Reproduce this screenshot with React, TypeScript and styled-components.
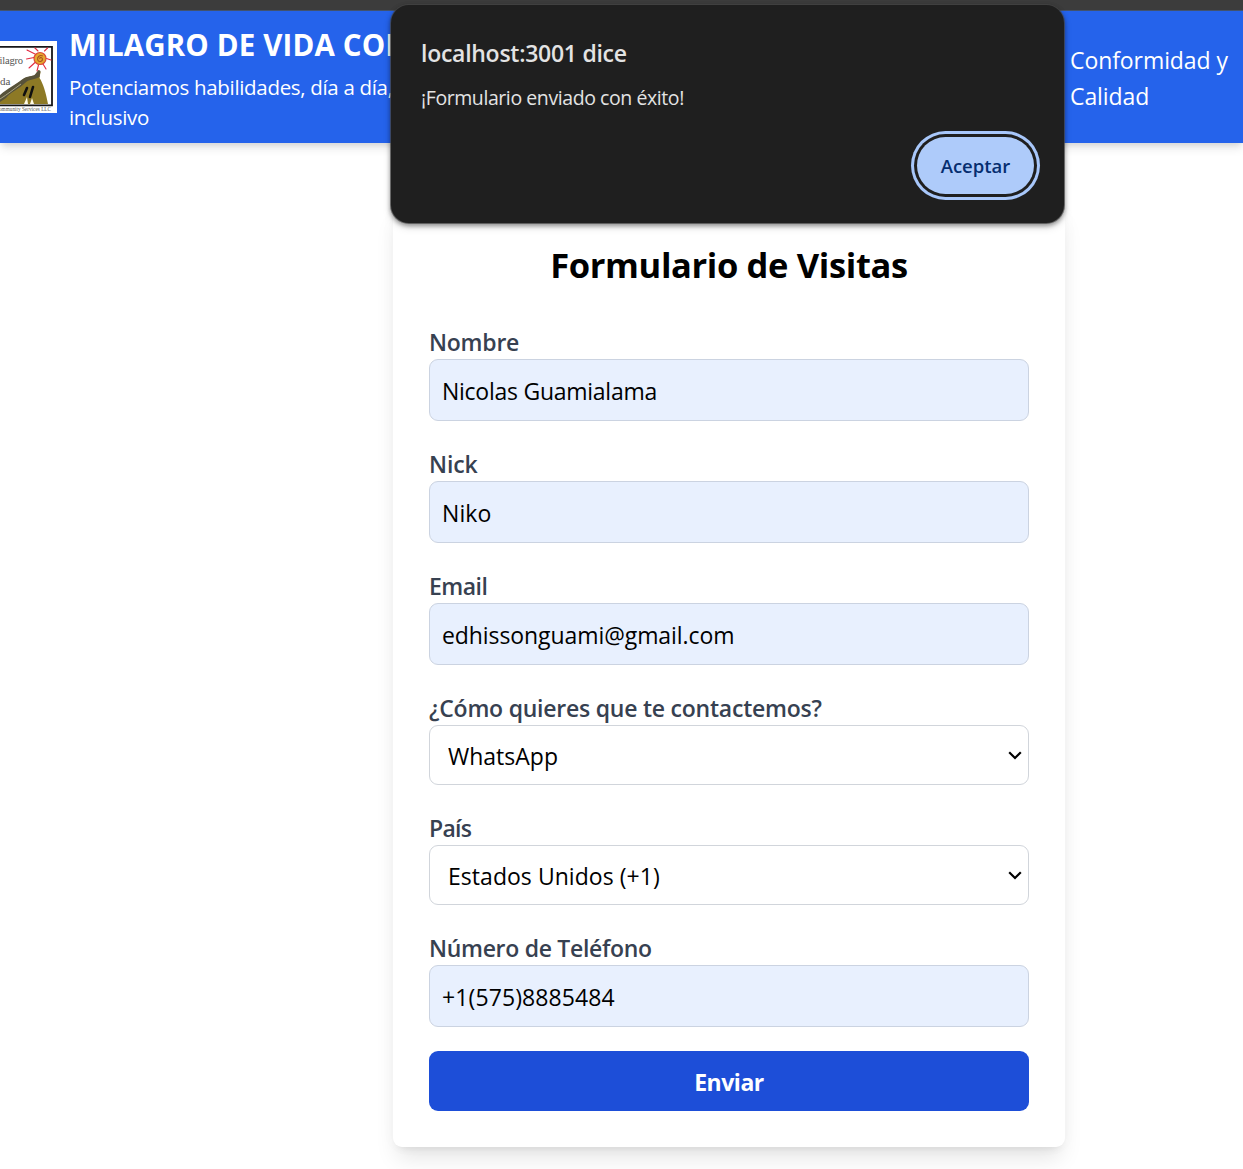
import React from "react";
import styled, { createGlobalStyle } from "styled-components";

const GlobalStyle = createGlobalStyle`
  *, *::before, *::after { box-sizing: border-box; }
  body {
    margin: 0;
    background: #ffffff;
    color: #000000;
    font-family: "Segoe UI", "Open Sans", "Noto Sans", sans-serif;
    overflow: hidden;
  }
`;

const Page = styled.div`
  position: relative;
  width: 1243px;
  height: 1169px;
  overflow: hidden;
  display: flex;
  flex-direction: column;
`;

const BrowserEdge = styled.div`
  flex: none;
  height: 11px;
  background: #3c3c3c;
  border-bottom: 1px solid #44546f;
`;

const Header = styled.header`
  flex: none;
  height: 132px;
  display: flex;
  align-items: center;
  background: #2563eb;
  color: #ffffff;
  box-shadow: 0 6px 9px -1px rgba(0, 0, 0, 0.1), 0 3px 6px -2px rgba(0, 0, 0, 0.1);
`;

const Logo = styled.svg`
  flex: none;
  width: 57px;
  height: 72px;
  margin-right: 12px;
`;

const Brand = styled.div`
  flex: none;
  width: 1001px;
  padding-top: 2px;
`;

const BrandName = styled.h1`
  margin: 0;
  font-size: 29.5px;
  line-height: 42px;
  font-weight: 700;
  letter-spacing: 0.15px;
  white-space: nowrap;
`;

const Tagline = styled.p`
  margin: 0;
  padding-top: 6px;
  font-size: 20.5px;
  line-height: 30px;
  letter-spacing: -0.32px;
`;

const NavLink = styled.a`
  color: #ffffff;
  font-size: 23px;
  line-height: 36px;
  margin-top: 2px;
  letter-spacing: -0.08px;
`;

const Main = styled.main`
  flex: none;
  display: flex;
  padding: 62px 178px 0 393px;
`;

const Card = styled.form`
  width: 672px;
  height: 942px;
  padding: 36px;
  display: flex;
  flex-direction: column;
  background: #ffffff;
  border-radius: 9px;
  box-shadow: 0 15px 22px -4px rgba(0, 0, 0, 0.1), 0 6px 9px -6px rgba(0, 0, 0, 0.1), 0 0 18px rgba(0, 0, 0, 0.025);
`;

const Heading = styled.h2`
  margin: 0 0 36px;
  text-align: center;
  font-size: 34.5px;
  line-height: 48px;
  font-weight: 700;
  letter-spacing: -0.36px;
`;

const Field = styled.div`
  display: flex;
  flex-direction: column;
  margin-bottom: 26px;

  &:last-of-type { margin-bottom: 24px; }
`;

const Label = styled.label<{ $tracking?: number }>`
  height: 34px;
  font-size: 23px;
  line-height: 34px;
  font-weight: 600;
  color: #374151;
  letter-spacing: ${({ $tracking = -0.23 }) => $tracking}px;
`;

const Input = styled.input<{ $tracking?: number }>`
  height: 62px;
  padding: 1px 12px 0;
  border: 1px solid #cbd3e1;
  border-radius: 9px;
  background: #e8f0fe;
  color: #000000;
  font: 400 23px/36px "Segoe UI", "Open Sans", "Noto Sans", sans-serif;
  letter-spacing: ${({ $tracking = 0 }) => $tracking}px;
  outline: none;
`;

const SelectFrame = styled.div`
  display: grid;
  align-items: center;

  & > * { grid-area: 1 / 1; }
`;

const Select = styled.select<{ $tracking?: number }>`
  appearance: none;
  width: 100%;
  height: 60px;
  padding: 1px 48px 0 18px;
  border: 1px solid #d1d5db;
  border-radius: 9px;
  background: #ffffff;
  color: #000000;
  font: 400 23px/36px "Segoe UI", "Open Sans", "Noto Sans", sans-serif;
  letter-spacing: ${({ $tracking = 0 }) => $tracking}px;
  outline: none;
`;

const Chevron = styled.svg`
  justify-self: end;
  width: 16px;
  height: 12px;
  margin-right: 6px;
  pointer-events: none;
`;

const Submit = styled.button`
  height: 60px;
  padding: 1px 0 0;
  border: 0;
  border-radius: 9px;
  background: #1d4ed8;
  color: #ffffff;
  font: 700 23px/36px "Segoe UI", "Open Sans", "Noto Sans", sans-serif;
  letter-spacing: -0.45px;
`;

const Dialog = styled.div`
  position: absolute;
  left: 391px;
  top: 5px;
  width: 673px;
  height: 218px;
  padding: 29px 30px 0 30px;
  display: flex;
  flex-direction: column;
  border-radius: 18px;
  background: #1f1f1f;
  color: #e3e3e3;
  box-shadow: 0 0 0 1px rgba(70, 70, 70, 0.7), 0 2px 4px 1px rgba(0, 0, 0, 0.35), 0 4px 8px rgba(0, 0, 0, 0.15);
`;

const DialogTitle = styled.div`
  height: 38px;
  font-size: 23px;
  line-height: 38px;
  font-weight: 600;
  letter-spacing: -0.27px;
`;

const DialogText = styled.p`
  margin: 11px 0 0;
  height: 30px;
  font-size: 19.5px;
  line-height: 30px;
  letter-spacing: -0.42px;
`;

const Accept = styled.button`
  align-self: flex-end;
  width: 117px;
  height: 57px;
  margin: 24px 0 0;
  padding: 1px 0 0;
  border: 0;
  border-radius: 29px;
  background: #aecbfa;
  color: #062e6f;
  font: 600 18.5px/30px "Segoe UI", "Open Sans", "Noto Sans", sans-serif;
  box-shadow: 0 0 0 3px #1f1f1f, 0 0 0 6px #a8c7fa;
`;

const LogoText = styled.text`
  font-family: "Liberation Serif", serif;
  fill: #555555;
`;

function BrandLogo() {
  return (
    <Logo viewBox="0 0 57 72" aria-label="Milagro de Vida">
      <rect width="57" height="72" fill="#ffffff" />
      <path d="M0 5.8H52V64.4H0" fill="#ffffff" stroke="#171719" strokeWidth="1.8" />
      <g stroke="#e22b42" strokeWidth="1.1" strokeLinecap="round" fill="none">
        <path d="M34 16.5 26.5 18" />
        <path d="M35 13 27 9" />
        <path d="M38 10 35 7" />
        <path d="M44.5 10 47.5 7" />
        <path d="M46.5 17.5 51 19" />
        <path d="M43 23 46 28" />
        <path d="M38.5 24 37 30" />
        <path d="M35 21.5 29 27" />
      </g>
      <circle cx="40" cy="17.5" r="6" fill="#e5a72e" stroke="#dc4a35" strokeWidth="1.2" />
      <path d="M40 18c-1-1.8 2-2.3 2.4-.1.4 2.9-3.8 3.7-4.7.9-.8-3.1 2.3-5.2 5.1-3.7" fill="none" stroke="#a8501e" strokeWidth="1.1" />
      <path d="M0 55C8 48 15 45 22 39 27 35 33 36 35 34L39 29 40.5 31 39.5 37C43 42 46 52 48 63H0Z" fill="#8d7925" />
      <path d="M0 54C8 47 15 44 22 38.500C27 34.500 33 35.500 35 33.500L38.500 29 40.500 30 39.500 36C33 39 29 38 25 42 19 48 12 50 6 57L0 61Z" fill="#57523a" />
      <path d="M0 58C8 53 14 48 21 43" stroke="#aaa583" strokeWidth="1" fill="none" />
      <g stroke="#101010" strokeWidth="2.6" strokeLinecap="round">
        <path d="M27 47 24 54" />
        <path d="M33 46 30 56" />
      </g>
      <path d="M24 63 27 56 28 63ZM30 63 32 57 34 63Z" fill="#fffbe7" />
      <LogoText x="-0.500" y="23" fontSize="10.500" textLength="23.500">ilagro</LogoText>
      <LogoText x="0" y="43.500" fontSize="11" textLength="10.500">da</LogoText>
      <LogoText x="-1" y="70.300" fontSize="5.200" textLength="52">ommunity Services LLC</LogoText>
    </Logo>
  );
}

function TextField({ label, value, labelTracking, tracking }: { label: string; value: string; labelTracking?: number; tracking?: number }) {
  return (
    <Field>
      <Label $tracking={labelTracking}>{label}</Label>
      <Input $tracking={tracking} defaultValue={value} />
    </Field>
  );
}

function SelectField({ label, value, labelTracking, tracking }: { label: string; value: string; labelTracking?: number; tracking?: number }) {
  return (
    <Field>
      <Label $tracking={labelTracking}>{label}</Label>
      <SelectFrame>
        <Select $tracking={tracking} defaultValue={value}>
          <option>{value}</option>
        </Select>
        <Chevron viewBox="0 0 16 12">
          <path d="M2.200 3.200 8 9 13.800 3.200" fill="none" stroke="#000000" strokeWidth="2.200" />
        </Chevron>
      </SelectFrame>
    </Field>
  );
}

export default function App() {
  return (
    <Page>
      <GlobalStyle />
      <BrowserEdge />
      <Header>
        <BrandLogo />
        <Brand>
          <BrandName>MILAGRO DE VIDA COM</BrandName>
          <Tagline>
            Potenciamos habilidades, día a día,
            <br />
            inclusivo
          </Tagline>
        </Brand>
        <NavLink>
          Conformidad y
          <br />
          Calidad
        </NavLink>
      </Header>
      <Main>
        <Card onSubmit={(e) => e.preventDefault()}>
          <Heading>Formulario de Visitas</Heading>
          <TextField label="Nombre" value="Nicolas Guamialama" tracking={-0.26} />
          <TextField label="Nick" value="Niko" labelTracking={-0.1} tracking={0.1} />
          <TextField label="Email" value="edhissonguami@gmail.com" labelTracking={-0.5} tracking={-0.08} />
          <SelectField label="¿Cómo quieres que te contactemos?" value="WhatsApp" />
          <SelectField label="País" value="Estados Unidos (+1)" labelTracking={-0.7} tracking={0.04} />
          <TextField label="Número de Teléfono" value="+1(575)8885484" labelTracking={-0.3} tracking={0.1} />
          <Submit type="submit">Enviar</Submit>
        </Card>
      </Main>
      <Dialog role="alertdialog">
        <DialogTitle>localhost:3001 dice</DialogTitle>
        <DialogText>¡Formulario enviado con éxito!</DialogText>
        <Accept type="button">Aceptar</Accept>
      </Dialog>
    </Page>
  );
}
